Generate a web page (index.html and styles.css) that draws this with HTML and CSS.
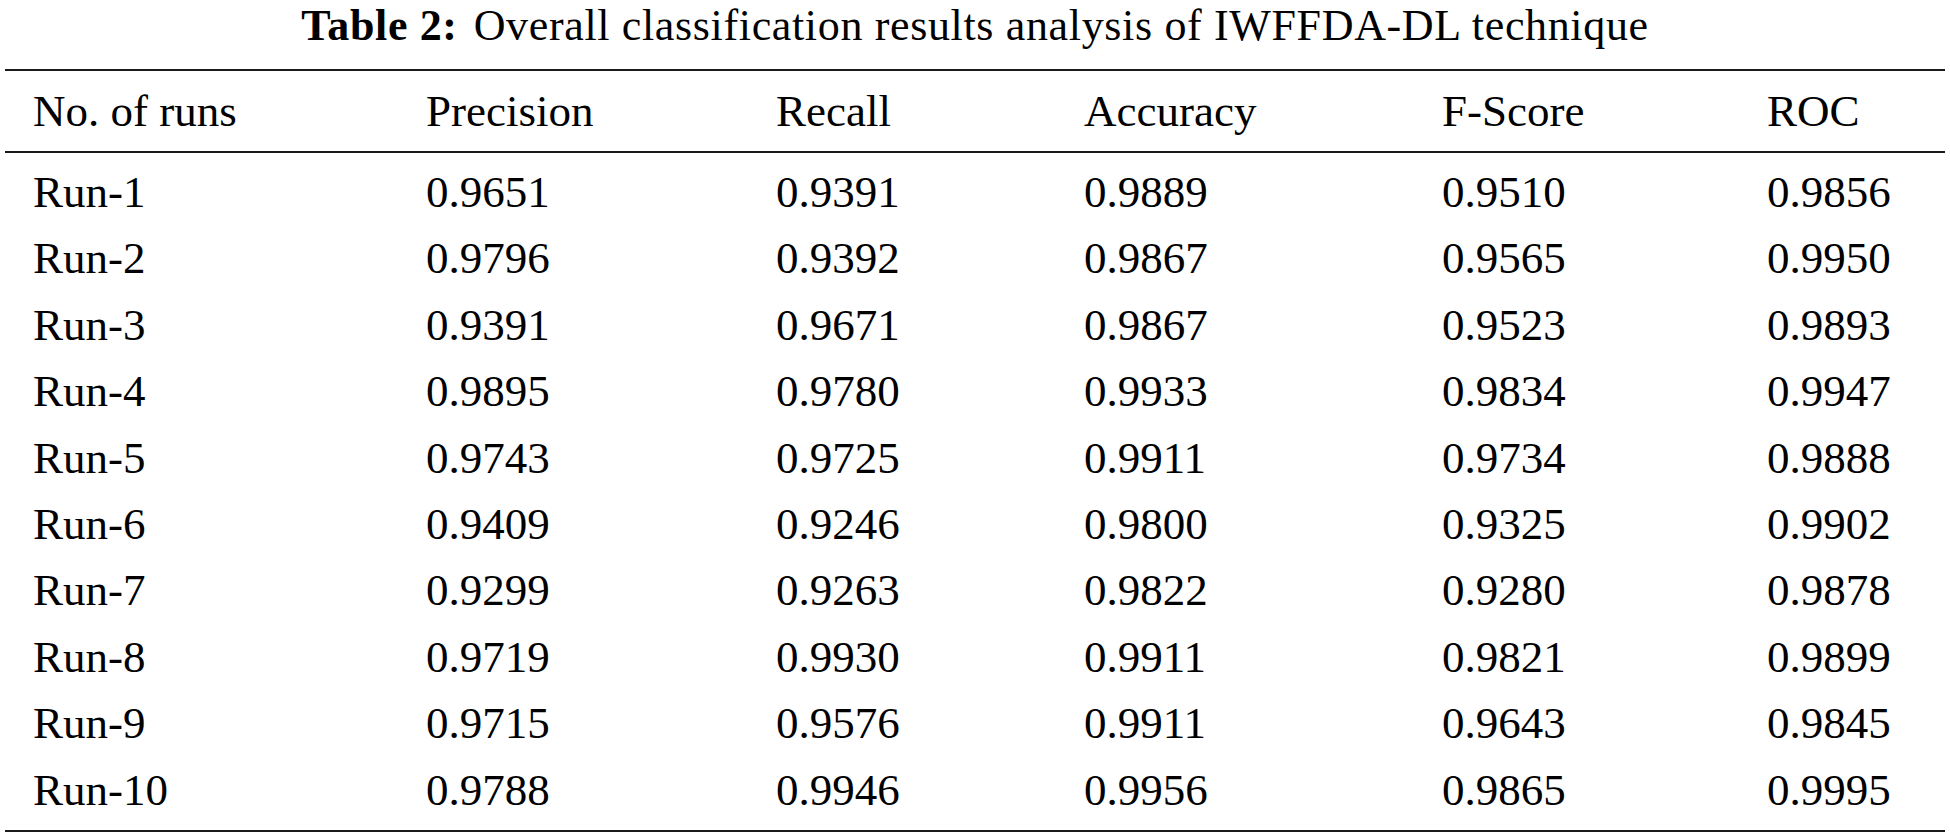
FILE: index.html
```html
<!DOCTYPE html>
<html lang="en">
<head>
<meta charset="utf-8">
<title>Table 2</title>
<link rel="stylesheet" href="styles.css">
</head>
<body>
<div class="page">
  <div class="caption"><span class="label">Table 2:</span><span class="caption-text">Overall classification results analysis of IWFFDA-DL technique</span></div>
  <table class="results">
    <colgroup>
      <col class="c1"><col class="c2"><col class="c3"><col class="c4"><col class="c5"><col class="c6">
    </colgroup>
    <thead>
      <tr><th>No. of runs</th><th>Precision</th><th>Recall</th><th>Accuracy</th><th>F-Score</th><th>ROC</th></tr>
    </thead>
    <tbody>
      <tr><td>Run-1</td><td>0.9651</td><td>0.9391</td><td>0.9889</td><td>0.9510</td><td>0.9856</td></tr>
      <tr><td>Run-2</td><td>0.9796</td><td>0.9392</td><td>0.9867</td><td>0.9565</td><td>0.9950</td></tr>
      <tr><td>Run-3</td><td>0.9391</td><td>0.9671</td><td>0.9867</td><td>0.9523</td><td>0.9893</td></tr>
      <tr><td>Run-4</td><td>0.9895</td><td>0.9780</td><td>0.9933</td><td>0.9834</td><td>0.9947</td></tr>
      <tr><td>Run-5</td><td>0.9743</td><td>0.9725</td><td>0.9911</td><td>0.9734</td><td>0.9888</td></tr>
      <tr><td>Run-6</td><td>0.9409</td><td>0.9246</td><td>0.9800</td><td>0.9325</td><td>0.9902</td></tr>
      <tr><td>Run-7</td><td>0.9299</td><td>0.9263</td><td>0.9822</td><td>0.9280</td><td>0.9878</td></tr>
      <tr><td>Run-8</td><td>0.9719</td><td>0.9930</td><td>0.9911</td><td>0.9821</td><td>0.9899</td></tr>
      <tr><td>Run-9</td><td>0.9715</td><td>0.9576</td><td>0.9911</td><td>0.9643</td><td>0.9845</td></tr>
      <tr><td>Run-10</td><td>0.9788</td><td>0.9946</td><td>0.9956</td><td>0.9865</td><td>0.9995</td></tr>
    </tbody>
  </table>
</div>
</body>
</html>
```
FILE: styles.css
```css
html, body {
  margin: 0;
  padding: 0;
  background: #ffffff;
}
body {
  font-family: "Liberation Serif", "Times New Roman", serif;
  color: #000000;
}
.page {
  padding: 0 5px;
}
.caption {
  font-size: 44px;
  line-height: normal;
  letter-spacing: 0.65px;
  text-align: center;
  margin: 0 0 17.5px;
  white-space: nowrap;
}
.label {
  font-weight: bold;
  margin-right: 16px;
}
.results {
  width: 1940px;
  border-collapse: collapse;
  table-layout: fixed;
  border-top: 2px solid #1a1a1a;
  border-bottom: 2px solid #1a1a1a;
}
.c1 { width: 393px; }
.c2 { width: 350px; }
.c3 { width: 308px; }
.c4 { width: 358px; }
.c5 { width: 325px; }
.c6 { width: 206px; }
.results th,
.results td {
  font-size: 45px;
  line-height: 66.4px;
  font-weight: normal;
  text-align: left;
  padding: 0 0 0 28px;
  white-space: nowrap;
}
.results thead th {
  padding-top: 7px;
  padding-bottom: 7px;
  border-bottom: 2px solid #1a1a1a;
}
.results tbody tr:first-child td {
  padding-top: 6px;
}
.results tbody tr:last-child td {
  padding-bottom: 7px;
}
```
